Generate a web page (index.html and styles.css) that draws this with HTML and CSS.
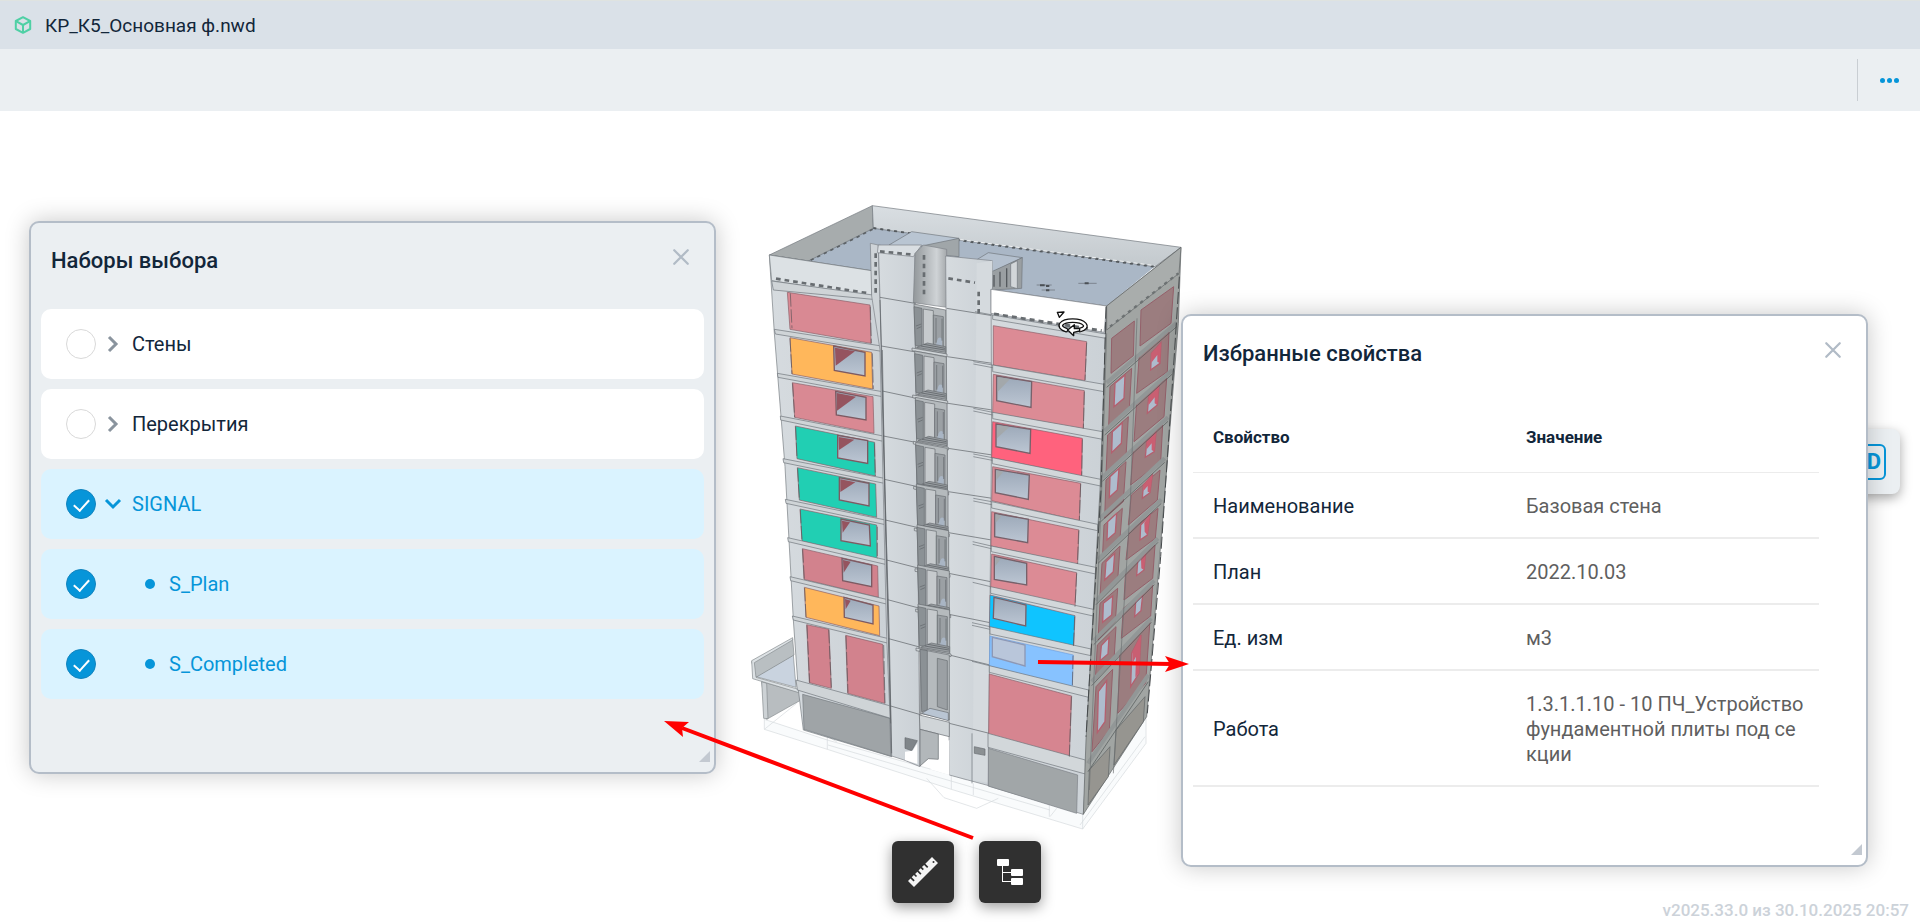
FILE: index.html
```html
<!DOCTYPE html>
<html lang="ru">
<head>
    <meta charset="UTF-8">
    <meta name="viewport" content="width=device-width, initial-scale=1.0">
    <title>КР_К5_Основная ф.nwd</title>
    <link rel="stylesheet" href="styles.css">
</head>
<body>
    <header class="title-bar">
        <svg class="file-icon" viewBox="0 0 18 18" fill="none" stroke="#4fd0a5" stroke-width="2" stroke-linejoin="round" aria-hidden="true">
            <path d="M9 1.2 16.2 5v8L9 16.8 1.8 13V5z"/>
            <path d="M2 5.2 9 9l7-3.8M9 9v7.5"/>
        </svg>
        <h1 class="file-name">КР_К5_Основная ф.nwd</h1>
    </header>

    <div class="toolbar">
        <button class="more-btn" type="button" aria-label="Ещё"><i></i><i></i><i></i></button>
    </div>

    <main class="viewer">
        <!-- Building model, 3 units per pixel -->
        <svg class="model" viewBox="0 0 1350 1950" aria-hidden="true">
            <defs>
                <linearGradient id="wall" x1="0" y1="0" x2="1" y2="0">
                    <stop offset="0" stop-color="#d6dbdf"/>
                    <stop offset="1" stop-color="#cbd1d6"/>
                </linearGradient>
                <linearGradient id="glass" x1="0" y1="0" x2="0" y2="1">
                    <stop offset="0" stop-color="#9ba8b8"/>
                    <stop offset="1" stop-color="#bcc6d3"/>
                </linearGradient>
                <linearGradient id="shade" x1="0" y1="0" x2="1" y2="0">
                    <stop offset="0" stop-color="#92979a"/>
                    <stop offset=".7" stop-color="#cfd3d6"/>
                    <stop offset="1" stop-color="#a5a9ac"/>
                </linearGradient>
                <linearGradient id="back" x1="0" y1="0" x2="0" y2="1">
                    <stop offset="0" stop-color="#d9dee2"/>
                    <stop offset="1" stop-color="#c3c9cd"/>
                </linearGradient>
                <g id="stair" stroke="#666b70" stroke-width="2">
                    <path fill="#b5babd" d="M0 0 95 18V150L4 132z"/>
                    <path fill="#8b9195" d="M0 8 24 13V128L4 124z"/>
                    <path fill="#c6cacd" d="M28 15 58 20V130L28 124z"/>
                    <path fill="#9ba0a4" d="M58 33 88 38V132L58 126z"/>
                    <path fill="#a9b5c4" stroke="none" d="M70 108q4-12 14-4v28l-20-4z"/>
                    <path fill="none" stroke="#62676b" d="M66 42v74M84 44v66M6 66l16-6M8 74l14-6"/>
                    <path fill="#999ea2" d="M8 130 40 117 95 128V145z"/>
                    <path fill="none" stroke="#53585c" d="M20 126l73 12M30 121l63 12"/>
                    <path fill="#cfd4d7" d="M-6 132 99 150V158L-6 140z"/>
                </g>
            </defs>

            <!-- foundation wireframe -->
            <g fill="#f9fbfc" stroke="#d5d9dc" stroke-width="2">
                <path d="M73 1588V1618L262 1678 634 1798 1028 1917 1218 1660V1580L1028 1860 634 1755 262 1650z"/>
                <path fill="none" d="M73 1618 170 1540M262 1678V1640L290 1655M634 1798V1755L680 1770M560 1765 612 1823 710 1855 775 1825M928 1880V1840L1028 1870V1917M1020 1905 1215 1640M930 1880 950 1855M700 1780V1815M264 1665 930 1860"/>
            </g>

            <!-- terrace -->
            <g stroke="#84898d" stroke-width="2">
                <path fill="#b8bdc0" d="M65 1475 183 1508V1530L80 1588z"/>
                <path fill="#cdd2d5" d="M65 1475 80 1480 84 1586 71 1585z"/>
                <path fill="#c9d3df" d="M48 1460 160 1395 168 1492z"/>
                <path fill="#b9bfc2" d="M35 1415 158 1347 162 1395 48 1462z"/>
                <path fill="#dce1e4" d="M35 1412 158 1343V1350L43 1418 48 1462 183 1500V1510L38 1466z"/>
            </g>

            <!-- roof -->
            <g stroke="#70767b" stroke-width="2">
                <path fill="#aab7c6" stroke="none" d="M200 213 400 112 1250 225 1100 348 750 300 395 245z"/>
                <path fill="#a7acad" d="M88 195 397 47 400 115 205 213z"/>
                <path fill="url(#back)" d="M397 47 1323 172 1245 230 400 115z"/>
                <path fill="none" stroke="#54595d" stroke-width="6" stroke-dasharray="9 12" d="M400 114 660 151 1242 230"/>
                <path fill="none" stroke="#5c6165" stroke-width="5" stroke-dasharray="10 12" d="M398 118 210 212"/>
                <path fill="none" stroke="#f0f2f3" stroke-width="3" stroke-dasharray="12 9" d="M640 146 1245 227"/>
                <path fill="#b9c5d2" d="M447 165 515 125 657 145 545 180z"/>
                <path fill="#a0a6a9" d="M545 168 657 145V200L545 190z"/>
                <path fill="#b4c0ce" d="M712 208 745 188 847 203 755 247z"/>
                <path fill="#9a9fa2" d="M755 245 847 203 845 295 755 300z"/>
                <path fill="#d2d6d9" d="M812 222 832 212V296L812 290z"/>
                <path fill="none" stroke="#54595d" stroke-width="4" d="M762 255V290M780 245V290M800 235V292"/>
                <path fill="none" stroke="#666c74" stroke-width="2" d="M890 285h45M905 300h40M1015 280h55"/>
                <path fill="none" stroke="#4b5055" stroke-width="6" d="M900 286h14M918 288h10M918 301h10M1034 280h12"/>
            </g>

            <!-- left block -->
            <g stroke="#747a7f" stroke-width="2">
                <path fill="url(#wall)" d="M88 195 395 242 420 320 455 1700 190 1620 175 1500 160 1290 135 830 103 430z"/>
                <path fill="#dce1e4" d="M88 195 395 242V318L95 272z"/>
                <path fill="none" stroke="#686d71" stroke-width="8" stroke-dasharray="14 12" d="M108 266 380 309"/>
                <path fill="#9fa4a7" d="M188 1513 450 1585 452 1698 192 1618z"/>
            </g>
            <g fill="#d98993" stroke="#8a5e66" stroke-width="2">
                <path d="M142 307 390 345 393 460 150 418z"/>
                <path fill="#ffb75b" d="M150 443 395 487 398 597 156 552z"/>
                <path d="M157 578 399 620 402 730 164 682z"/>
                <path fill="#21cfb3" d="M166 708 404 757 406 858 171 806z"/>
                <path fill="#21cfb3" d="M172 833 407 882 410 982 178 930z"/>
                <path fill="#21cfb3" d="M180 957 410 1005 411 1107 186 1053z"/>
                <path fill="#d2828d" d="M187 1076 413 1128 415 1222 192 1168z"/>
                <path fill="#ffb75b" d="M193 1192 417 1248 419 1337 198 1282z"/>
                <path fill="#d2828d" d="M200 1304 267 1318 274 1495 208 1478z"/>
                <path fill="#d2828d" d="M317 1336 428 1363 434 1540 323 1510z"/>
            </g>
            <!-- left block windows: glass, then the inner jamb -->
            <g fill="url(#glass)" stroke="#7d5a62" stroke-width="4">
                <path d="M281 468 375 487V558L283 541z"/>
                <path d="M287 604 378 622V690L289 675z"/>
                <path d="M293 736 383 752V820L293 804z"/>
                <path d="M298 863 387 880V948L298 930z"/>
                <path d="M303 987 388 1005 391 1068 303 1052z"/>
                <path d="M306 1105 395 1125V1190L308 1172z"/>
                <path d="M312 1222 399 1245V1302L313 1282z"/>
            </g>
            <g fill="#95545f">
                <path d="M285 473 345 484 287 527z"/>
                <path d="M290 609 348 620 291 662z"/>
                <path d="M296 741 343 749 297 780z"/>
                <path d="M301 868 346 877 301 906z"/>
                <path d="M306 992 330 997 308 1028z"/>
                <path d="M309 1110 332 1115 311 1148z"/>
                <path d="M315 1227 332 1232 317 1258z"/>
            </g>
            <!-- left block slabs -->
            <g fill="#cfd4d7" stroke="#6d7378" stroke-width="2">
                <path d="M95 273 420 318V330L100 300z"/>
                <path d="M103 418 425 468V484L106 432z"/>
                <path d="M112 550 427 605V620L114 562z"/>
                <path d="M121 678 430 738V754L122 690z"/>
                <path d="M129 806 433 865V880L131 818z"/>
                <path d="M136 928 436 990V1004L138 940z"/>
                <path d="M143 1043 440 1110V1124L145 1055z"/>
                <path d="M150 1160 443 1229V1243L152 1172z"/>
                <path d="M157 1278 446 1346V1360L160 1290z"/>
                <path d="M168 1470 452 1548V1585L172 1500z"/>
            </g>
            <g fill="none" stroke="#5b5357" stroke-width="2" stroke-dasharray="40 8">
                <path d="M151 310 156 415M150 445 156 552M158 580 164 682M167 710 171 806M173 835 178 930M181 960 186 1053M188 1078 193 1168M194 1194 198 1282M201 1306 209 1478M318 1338 324 1508M266 1320 274 1492M391 350 394 460M397 490 400 597M403 760 406 858M412 1010V1107M431 1365 435 1540"/>
            </g>

            <!-- lift shaft walls -->
            <g stroke="#7b8186" stroke-width="2">
                <path fill="#cfd4d8" d="M391 160 415 165 425 480 455 1700 440 1340 420 480 395 318z"/>
                <path fill="url(#wall)" d="M415 165 525 182 540 1730 492 1710 455 1698 425 480z"/>
                <path fill="#d9dee2" d="M415 165 545 165 520 200 412 188z"/>
                <path fill="url(#shade)" d="M525 190 550 165 620 178V352L520 338z"/>
                <path fill="url(#wall)" d="M617 198 757 212 750 1788 628 1755z"/>
                <path fill="#d5dade" d="M710 220 757 212 755 370 752 1780 698 1770z" stroke="none"/>
            </g>
            <g fill="none" stroke="#686d71" stroke-width="8" stroke-dasharray="14 12">
                <path d="M407 190V310M420 184 518 194M552 195V325M625 265 705 278M716 305V370"/>
            </g>
            <g fill="none" stroke="#5a5f63" stroke-width="2">
                <path d="M420 330 430 750 448 1345 455 1690M427 480 436 1000 452 1600"/>
                <path d="M420 322 525 340M424 468 528 486M427 603 530 625M430 738 532 758M433 868 533 890M436 990 535 1013M440 1110 538 1135M443 1229 540 1255M446 1346 542 1372M452 1548 545 1575"/>
                <path d="M620 355 757 377M622 500 757 520M624 640 757 660M624 775 757 795M625 905 757 925M626 1028 755 1050M626 1150 752 1175M627 1273 750 1298M628 1395 750 1425M628 1600 748 1630"/>
            </g>

            <!-- stairwell -->
            <use href="#stair" x="522" y="342"/>
            <use href="#stair" x="524" y="483"/>
            <use href="#stair" x="526" y="622"/>
            <use href="#stair" x="527" y="757"/>
            <use href="#stair" x="529" y="882"/>
            <use href="#stair" x="531" y="1004"/>
            <use href="#stair" x="533" y="1125"/>
            <use href="#stair" x="534" y="1242"/>
            <g stroke="#666b70" stroke-width="2">
                <path fill="#b5babd" d="M540 1378 628 1395V1590L540 1570z"/>
                <path fill="#8b9195" d="M540 1378 562 1382V1560L545 1565z"/>
                <path fill="#9ba0a4" d="M592 1405 622 1412V1560L592 1550z"/>
                <path fill="#b9c5d3" d="M545 1570 570 1555 625 1568V1592z"/>
                <path fill="#d0d5d8" d="M538 1575 628 1597V1640L540 1618z"/>
                <path fill="#b2b7ba" d="M540 1618 595 1632V1708L565 1706 540 1728z"/>
                <path fill="#7f8589" d="M495 1643 532 1652 515 1682 495 1675z"/>
                <path fill="#fff" stroke="none" d="M495 1685 518 1682 532 1660V1722L495 1710z"/>
                <path fill="#fff" stroke="none" d="M597 1665 628 1650V1755L570 1738 597 1708z"/>
                <path fill="#8b9093" d="M703 1670 735 1677V1696L703 1690z"/>
            </g>

            <!-- right block, front -->
            <g transform="translate(660)" stroke="#7b8186" stroke-width="2">
                <path fill="url(#wall)" d="M93 298 440 348 425 900 370 1873 85 1788 95 700z"/>
                <path fill="#fff" d="M93 298 440 348 432 427 93 370z"/>
                <path fill="none" stroke="#686d71" stroke-width="9" stroke-dasharray="15 12" d="M102 372 425 422"/>
                <path fill="#a1a6a8" d="M85 1675 353 1755 350 1870 85 1788z"/>
            </g>
            <g transform="translate(660)" fill="#dc8b95" stroke="#8a5e66" stroke-width="2">
                <path d="M100 407 380 455 375 572 100 525z"/>
                <path d="M100 553 373 602 370 717 98 668z"/>
                <path fill="#ff627d" d="M98 695 367 745 365 858 95 803z"/>
                <path d="M98 830 362 880 358 992 95 932z"/>
                <path d="M95 965 357 1020 353 1123 93 1068z"/>
                <path d="M95 1092 350 1148 345 1252 92 1195z"/>
                <path fill="#0fc4ff" d="M90 1215 345 1277 341 1375 88 1312z"/>
                <path fill="#87c2ff" stroke="#6d9fe0" d="M90 1338 340 1395 337 1493 88 1428z"/>
                <path fill="#d68590" d="M88 1452 335 1518 328 1702 86 1633z"/>
            </g>
            <g transform="translate(660)" fill="url(#glass)" stroke="#77616a" stroke-width="4">
                <path d="M110 558 215 575 213 652 110 632z"/>
                <path d="M108 702 212 718 210 790 108 770z"/>
                <path d="M106 838 208 855 205 928 106 908z"/>
                <path d="M104 970 205 988 203 1058 104 1040z"/>
                <path d="M103 1099 200 1120V1185L103 1168z"/>
                <path d="M102 1222 198 1245 197 1308 100 1285z"/>
                <path fill="#b9c6da" stroke="#8d98b5" d="M97 1342 195 1365V1428L97 1400z"/>
            </g>
            <g transform="translate(660)" fill="#a3a8ab">
                <path d="M113 561 150 567 113 605z"/>
                <path d="M111 705 148 711 111 745z"/>
                <path d="M109 841 130 845 109 870z"/>
                <path d="M107 973 125 977 107 998z"/>
                <path d="M106 1103 122 1107 106 1128z"/>
            </g>
            <g transform="translate(660)" fill="#d2d7da" stroke="#6d7378" stroke-width="2">
                <path d="M98 375 438 432V445L98 388z"/>
                <path d="M98 525 432 583V605L98 545z"/>
                <path d="M98 667 428 725V748L98 686z"/>
                <path d="M97 803 422 868V888L97 821z"/>
                <path d="M95 935 413 1003V1022L95 954z"/>
                <path d="M94 1068 407 1132V1152L94 1085z"/>
                <path d="M92 1190 400 1258V1278L92 1210z"/>
                <path d="M90 1310 393 1377V1397L90 1332z"/>
                <path d="M88 1427 386 1500V1522L88 1447z"/>
                <path d="M84 1630 376 1710V1752L84 1672z"/>
                <path fill="none" d="M45 365 98 375M40 515 98 525M40 522 98 533M40 655 98 667M40 663 98 675M40 792 97 803M40 800 97 811M40 925 95 935M40 933 95 944M38 1055 94 1068M38 1063 94 1076M38 1177 92 1190M36 1298 90 1310M36 1306 90 1318M36 1414 88 1427M36 1630V1780"/>
            </g>
            <path fill="none" stroke="#5b5357" stroke-width="2" stroke-dasharray="40 8" d="M1040 458 1035 570M1033 605 1030 715M1027 748 1025 856M1022 882 1018 990M1016 1022 1012 1122M1010 1150 1005 1250M1004 1280 1000 1375M999 1397 997 1492M994 1520 988 1700"/>

            <!-- right block, side -->
            <g transform="translate(660)" stroke="#5f6465" stroke-width="2">
                <path fill="#a1a5a3" d="M440 348 663 172 655 400 608 990 560 1580 370 1873 378 1650 420 900z"/>
                <path fill="#a9adac" d="M440 348 663 172 657 250 440 420z"/>
                <path fill="none" stroke="#6d7273" stroke-width="7" stroke-dasharray="10 13" d="M450 410 655 250"/>
                <path fill="#969590" d="M388 1740 450 1670 445 1760 384 1845zM468 1620 555 1520 550 1595 462 1725z"/>
            </g>
            <g transform="translate(660)" fill="#9b7d7f" stroke="#94606a" stroke-width="3">
                <path d="M455 445 523 393 520 497 453 550zM543 360 641 290 633 400 540 468z"/>
                <path d="M450 590 515 535 508 655 446 712zM538 490 627 425 622 545 530 610z"/>
                <path d="M443 735 505 680 498 800 438 855zM530 635 620 565 612 680 522 755z"/>
                <path d="M438 870 498 815 490 935 434 985zM520 780 608 705 602 815 512 885z"/>
                <path d="M432 1005 487 955 480 1045 428 1090zM514 915 600 840 592 930 505 1005z"/>
                <path d="M426 1120 480 1068 473 1172 420 1220zM507 1025 594 955 586 1045 498 1110z"/>
                <path d="M420 1240 473 1195 466 1295 414 1350zM497 1140 585 1065 578 1165 492 1230z"/>
                <path d="M412 1365 468 1310 462 1410 406 1470zM490 1255 578 1185 572 1278 484 1345z"/>
                <path d="M408 1490 458 1438 448 1620 396 1685zM480 1380 570 1290 557 1480 473 1570z"/>
            </g>
            <g transform="translate(660)" fill="#aebccd" stroke="#b3606f" stroke-width="4">
                <path d="M465 580 495 555 492 625 462 650zM574 490 603 458 600 520 572 540z"/>
                <path d="M457 725 487 698 484 760 455 788zM566 620 597 588 592 645 562 670z"/>
                <path d="M450 860 477 835 472 900 448 922zM560 755 588 727 583 785 556 802z"/>
                <path d="M443 995 470 970 466 1028 441 1050zM550 885 577 855 570 908 547 925z"/>
                <path d="M438 1115 464 1090 460 1145 434 1170zM542 1005 570 975 562 1035 540 1050z"/>
                <path d="M430 1240 458 1218 455 1275 428 1297zM533 1115 557 1088 552 1140 530 1157z"/>
                <path d="M424 1367 447 1342 444 1392 420 1412zM527 1235 548 1215 543 1262 524 1280z"/>
                <path d="M415 1505 440 1472 435 1595 412 1628zM515 1390 543 1335 537 1450 512 1490z"/>
            </g>
            <!-- reveals on the deep window jambs -->
            <path fill="#c95f72" d="M1234 490 1263 458 1260 520 1252 515V495L1234 518zM1226 620 1257 588 1252 645 1244 640V622L1226 645zM1220 755 1248 727 1243 785 1235 780V760L1220 778zM1210 885 1237 855 1230 908 1223 905V888L1210 903zM1213 998 1230 975 1222 1035 1214 1025zM1203 1108 1217 1088 1212 1140 1204 1135zM1177 1385 1203 1335 1197 1450 1186 1462 1188 1400 1177 1420z"/>
            <g transform="translate(660)" fill="none" stroke="#929797" stroke-width="12">
                <path d="M440 578 650 398M434 722 637 540M427 862 624 682M420 985 614 805M414 1108 604 928M408 1232 594 1045M401 1352 583 1172M395 1475 574 1285M384 1720 565 1455"/>
            </g>
            <g transform="translate(660)" fill="none" stroke="#4f5455" stroke-width="2">
                <path d="M440 592 650 410M434 735 637 552M427 874 624 694M420 997 614 817M414 1120 604 940M408 1244 594 1057M401 1364 583 1184M395 1487 574 1297M384 1745 565 1475"/>
                <path d="M531 385 510 960 495 1200 460 1750M440 430 425 900 388 1800" stroke="#6b7071"/>
            </g>
            <path fill="none" stroke="#45494b" stroke-width="3" stroke-dasharray="36 10" d="M1098 350 1083 900 1038 1640M1318 260 1300 540 1262 1100 1222 1570"/>

            <!-- orbit cursor -->
            <g fill="none" stroke-linecap="round">
                <path stroke="#111" stroke-width="14" d="M978 420c-30-10-14-28 20-28s54 20 22 28"/>
                <path stroke="#fff" stroke-width="7" d="M978 420c-30-10-14-28 20-28s54 20 22 28"/>
                <path stroke="#111" stroke-width="4" fill="#fff" stroke-linejoin="round" d="M952 367l20-1-14 16z"/>
                <path stroke="#111" stroke-width="4" fill="#fff" stroke-linejoin="round" d="M1003 404l-20 16 18 17v-10l18-4v-8l-16 1z"/>
            </g>
        </svg>

        <button class="view-btn" type="button" aria-label="3D"><span class="view-icon">3D</span></button>

        <section class="panel panel-sets">
            <div class="panel-header">
                <h2>Наборы выбора</h2>
                <button class="close-btn" type="button" aria-label="Закрыть">
                    <svg viewBox="0 0 16 16"><path d="M2 2 14 14M14 2 2 14"/></svg>
                </button>
            </div>
            <ul class="set-list">
                <li class="set-item">
                    <input type="checkbox" id="walls">
                    <button class="toggle" type="button" aria-label="Развернуть"><svg viewBox="0 0 20 20"><path d="M6 3l7 7-7 7"/></svg></button>
                    <label for="walls">Стены</label>
                </li>
                <li class="set-item">
                    <input type="checkbox" id="floors">
                    <button class="toggle" type="button" aria-label="Развернуть"><svg viewBox="0 0 20 20"><path d="M6 3l7 7-7 7"/></svg></button>
                    <label for="floors">Перекрытия</label>
                </li>
                <li class="set-item selected">
                    <input type="checkbox" id="signal" checked>
                    <button class="toggle" type="button" aria-label="Свернуть"><svg viewBox="0 0 20 20"><path d="M3 6l7 7 7-7"/></svg></button>
                    <label for="signal">SIGNAL</label>
                </li>
                <li class="set-item selected child">
                    <input type="checkbox" id="plan" checked>
                    <label for="plan">S_Plan</label>
                </li>
                <li class="set-item selected child">
                    <input type="checkbox" id="completed" checked>
                    <label for="completed">S_Completed</label>
                </li>
            </ul>
            <span class="resize-grip"></span>
        </section>

        <section class="panel panel-props">
            <div class="panel-header">
                <h2>Избранные свойства</h2>
                <button class="close-btn" type="button" aria-label="Закрыть">
                    <svg viewBox="0 0 16 16"><path d="M2 2 14 14M14 2 2 14"/></svg>
                </button>
            </div>
            <table class="props">
                <thead>
                    <tr><th scope="col">Свойство</th><th scope="col">Значение</th></tr>
                </thead>
                <tbody>
                    <tr><th scope="row">Наименование</th><td>Базовая стена</td></tr>
                    <tr><th scope="row">План</th><td>2022.10.03</td></tr>
                    <tr><th scope="row">Ед. изм</th><td>м3</td></tr>
                    <tr><th scope="row">Работа</th><td>1.3.1.1.10 - 10 ПЧ_Устройство<br>фундаментной плиты под се<br>кции</td></tr>
                </tbody>
            </table>
            <span class="resize-grip"></span>
        </section>

        <!-- callout arrows -->
        <svg class="arrows" viewBox="0 0 530 190" fill="#f00" aria-hidden="true">
            <path d="M313 186 22 76" stroke="#f00" stroke-width="4"/>
            <path d="M4 69 29 70 22 76 23 85z"/>
            <path d="M378 10 512 12" stroke="#f00" stroke-width="4"/>
            <path d="M529 12 505 4 510 12 505 20z"/>
        </svg>

        <div class="tools">
            <button class="tool-btn" type="button" aria-label="Измерения">
                <svg viewBox="0 0 32 32" fill="#f4f4f4">
                    <path d="M25 1l6 6L7 31l-6-6 2.500-2.500 3 3 1.200-1.200-3-3 2.200-2.200 2 2 1.200-1.200-2-2 2.200-2.200 3 3 1.200-1.200-3-3 2.200-2.200 2 2 1.200-1.200-2-2 2.200-2.200 3 3 1.200-1.200-3-3z"/>
                    <circle cx="26.500" cy="6" r="1" fill="#303030"/>
                </svg>
            </button>
            <button class="tool-btn" type="button" aria-label="Структура">
                <svg viewBox="0 0 32 32" fill="#fff">
                    <rect x="3" y="3" width="12" height="7" rx="1"/>
                    <rect x="17" y="13" width="12" height="7" rx="1"/>
                    <rect x="17" y="22" width="12" height="7" rx="1"/>
                    <path d="M8 10h1v6h8v1H9v8h8v1H8z"/>
                </svg>
            </button>
        </div>

        <p class="version">v2025.33.0 из 30.10.2025 20:57</p>
    </main>
</body>
</html>
```

FILE: styles.css
```css
:root {
    --text: #12263a;
    --accent: #0695d9;
    --border: #b4bdc8;
    --surface: #ebeff2;
}

* {
    margin: 0;
    padding: 0;
    box-sizing: border-box;
}

body {
    display: flex;
    flex-direction: column;
    min-height: 100vh;
    font-family: Roboto, "Noto Sans", sans-serif;
    font-size: 20px;
    line-height: 25px;
    color: var(--text);
    background: #fff;
}

button {
    border: none;
    background: none;
    font: inherit;
    cursor: pointer;
}

/* Header */
.title-bar {
    display: flex;
    align-items: center;
    gap: 13px;
    height: 49px;
    padding: 0 14px;
    border-top: 1px solid #dfe3e0;
    background: #dae1e8;
}

.file-icon {
    width: 18px;
    height: 18px;
}

.file-name {
    font-size: 19px;
    font-weight: 400;
}

.toolbar {
    display: flex;
    justify-content: flex-end;
    align-items: center;
    height: 62px;
    background: var(--surface);
}

.more-btn {
    display: flex;
    justify-content: center;
    align-items: center;
    gap: 2px;
    width: 63px;
    height: 42px;
    border-left: 1px solid #c9ced3;
}

.more-btn i {
    width: 5px;
    height: 5px;
    border-radius: 50%;
    background: var(--accent);
}

/* Viewer */
.viewer {
    position: relative;
    flex: 1;
    min-height: 811px;
    overflow: hidden;
}

.model {
    position: absolute;
    top: 79px;
    left: calc(50% - 220px);
    width: 450px;
    height: 650px;
}

.arrows {
    position: absolute;
    top: 541px;
    left: calc(50% - 300px);
    width: 530px;
    height: 190px;
    pointer-events: none;
}

.view-btn {
    position: absolute;
    top: 318px;
    right: 20px;
    display: flex;
    justify-content: center;
    align-items: center;
    width: 65px;
    height: 65px;
    border-radius: 8px;
    background: var(--surface);
    box-shadow: 0 4px 12px rgba(0, 0, 0, 0.35);
}

.view-icon {
    width: 36px;
    height: 36px;
    border: 2px solid var(--accent);
    border-radius: 6px;
    font-size: 22px;
    font-weight: 700;
    line-height: 32px;
    color: var(--accent);
}

/* Panels */
.panel {
    position: absolute;
    width: 687px;
    padding: 0 10px;
    border: 2px solid var(--border);
    border-radius: 10px;
    background: #fff;
    box-shadow: 0 0 24px rgba(0, 0, 0, 0.22);
}

.panel-sets {
    top: 110px;
    left: 29px;
    padding-bottom: 73px;
    background: var(--surface);
}

.panel-props {
    top: 203px;
    right: 52px;
    padding-bottom: 78px;
}

.panel-header {
    display: flex;
    justify-content: space-between;
    align-items: flex-start;
    height: 86px;
    padding: 24px 11px 0 10px;
}

.panel-header h2 {
    font-size: 22px;
    font-weight: 500;
    line-height: 28px;
}

.close-btn {
    display: flex;
    padding: 1px 3px;
}

.close-btn svg {
    width: 18px;
    height: 18px;
    fill: none;
    stroke: #b1bbc6;
    stroke-width: 2;
    stroke-linecap: round;
}

.resize-grip {
    position: absolute;
    right: 4px;
    bottom: 10px;
    width: 11px;
    height: 11px;
    background: #c3c9d1;
    clip-path: polygon(100% 0, 100% 100%, 0 100%);
}

/* Selection sets */
.set-list {
    display: flex;
    flex-direction: column;
    gap: 10px;
    list-style: none;
}

.set-item {
    display: flex;
    align-items: center;
    height: 70px;
    padding: 0 25px;
    border-radius: 10px;
    background: #fff;
}

.set-item input {
    appearance: none;
    width: 30px;
    height: 30px;
    border: 1px solid #d9d9d9;
    border-radius: 50%;
    background: #fff;
}

.set-item input:checked {
    position: relative;
    border-color: #1284be;
    background: var(--accent);
}

.set-item input:checked::after {
    content: "";
    position: absolute;
    top: 6px;
    left: 10px;
    width: 7px;
    height: 13px;
    border: solid #fff;
    border-width: 0 2px 2px 0;
    transform: rotate(42deg);
}

.toggle {
    display: flex;
    margin: 0 9px 0 7px;
}

.toggle svg {
    width: 20px;
    height: 20px;
    fill: none;
    stroke: #8a949e;
    stroke-width: 3;
}

.set-item.selected {
    background: #daf3ff;
    color: var(--accent);
}

.selected .toggle svg {
    stroke: var(--accent);
}

.child label {
    display: flex;
    align-items: center;
    gap: 14px;
    margin-left: 49px;
}

.child label::before {
    content: "";
    width: 10px;
    height: 10px;
    border-radius: 50%;
    background: var(--accent);
}

/* Properties */
.props {
    width: calc(100% - 37px);
    table-layout: fixed;
    border-collapse: separate;
    border-spacing: 0;
}

.props th,
.props td {
    padding: 21px 10px 18px 20px;
    border-bottom: 2px solid #ececec;
    text-align: left;
    font-weight: 400;
}

.props td {
    padding-right: 0;
    color: #5f5f5f;
}

.props thead th {
    height: 71px;
    padding: 20px 10px 20px 20px;
    border-bottom-width: 1px;
    font-size: 17px;
    font-weight: 700;
}

/* Bottom tools */
.tools {
    position: absolute;
    right: 0;
    bottom: 19px;
    left: 13px;
    display: flex;
    justify-content: center;
    gap: 25px;
    pointer-events: none;
}

.tool-btn {
    display: flex;
    justify-content: center;
    align-items: center;
    width: 62px;
    height: 62px;
    border-radius: 6px;
    background: #303030;
    box-shadow: 0 4px 14px rgba(0, 0, 0, 0.4);
    pointer-events: auto;
}

.tool-btn svg {
    width: 32px;
    height: 32px;
}

.version {
    position: absolute;
    right: 11px;
    bottom: 0;
    font-size: 17px;
    font-weight: 500;
    line-height: 24px;
    color: #ccd2d9;
}
```
